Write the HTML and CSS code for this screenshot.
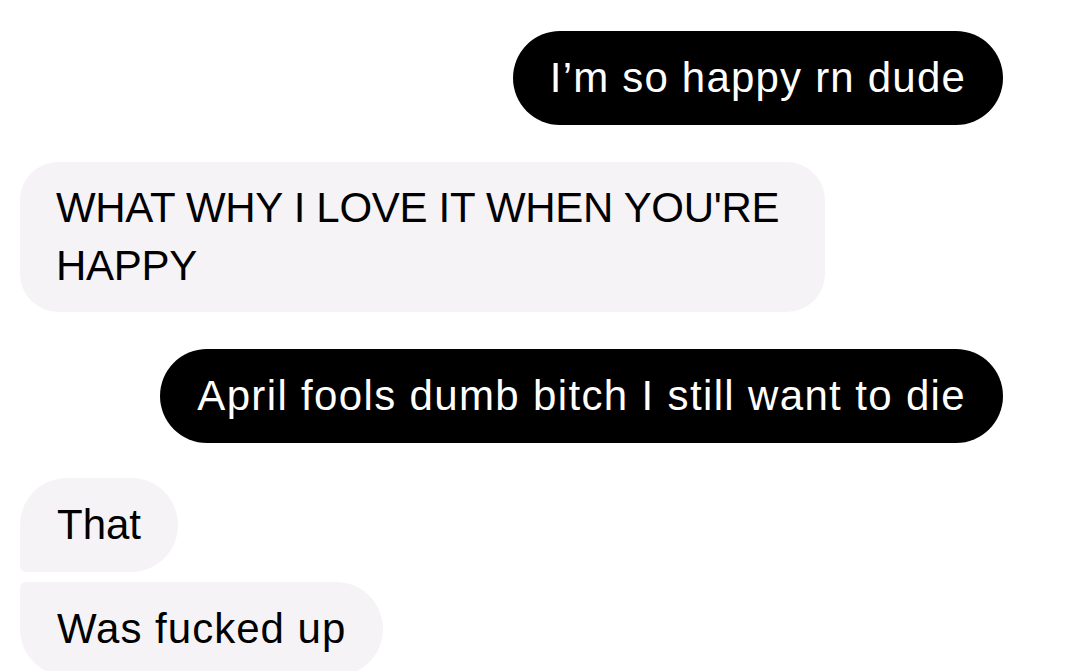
FILE: index.html
```html
<!DOCTYPE html>
<html lang="en">
<head>
<meta charset="utf-8">
<title>Chat</title>
<link rel="stylesheet" href="styles.css">
</head>
<body>
<main class="chat">
  <div class="row row--out">
    <div class="bubble bubble--out">I’m so happy rn dude</div>
  </div>
  <div class="row row--in">
    <div class="bubble bubble--in bubble--caps">WHAT WHY I LOVE IT WHEN YOU'RE HAPPY</div>
  </div>
  <div class="row row--out">
    <div class="bubble bubble--out bubble--wide">April fools dumb bitch I still want to die</div>
  </div>
  <div class="group">
    <div class="bubble bubble--in bubble--first">That</div>
    <div class="bubble bubble--in bubble--last">Was fucked up</div>
  </div>
</main>
</body>
</html>
```

FILE: styles.css
```css
html, body {
  margin: 0;
  padding: 0;
  background: #ffffff;
  overflow: hidden;
}

.chat {
  display: flex;
  flex-direction: column;
  gap: 37px;
  padding: 31px 69px 0 20px;
  font-family: "Liberation Sans", Arial, Helvetica, sans-serif;
  font-size: 42px;
  line-height: 58px;
}

.row {
  display: flex;
}

.row--out {
  justify-content: flex-end;
}

.row--in {
  justify-content: flex-start;
}

.bubble {
  box-sizing: border-box;
  padding: 18px 37px;
  letter-spacing: 1.2px;
  border-radius: 48px;
}

.bubble--out {
  background: #000000;
  color: #ffffff;
}

.bubble--wide {
  letter-spacing: 1.35px;
}

.bubble--in {
  background: #f6f3f6;
  color: #000000;
}

.bubble--caps {
  letter-spacing: -0.3px;
  width: 805px;
  padding: 17px 36px;
  border-radius: 38px;
}

.group {
  display: flex;
  flex-direction: column;
  align-items: flex-start;
  gap: 10px;
  margin-top: -2px;
}

.bubble--first {
  border-radius: 48px 48px 48px 6px;
  letter-spacing: 0;
}

.bubble--last {
  border-radius: 6px 48px 48px 48px;
  letter-spacing: 1px;
}
```
